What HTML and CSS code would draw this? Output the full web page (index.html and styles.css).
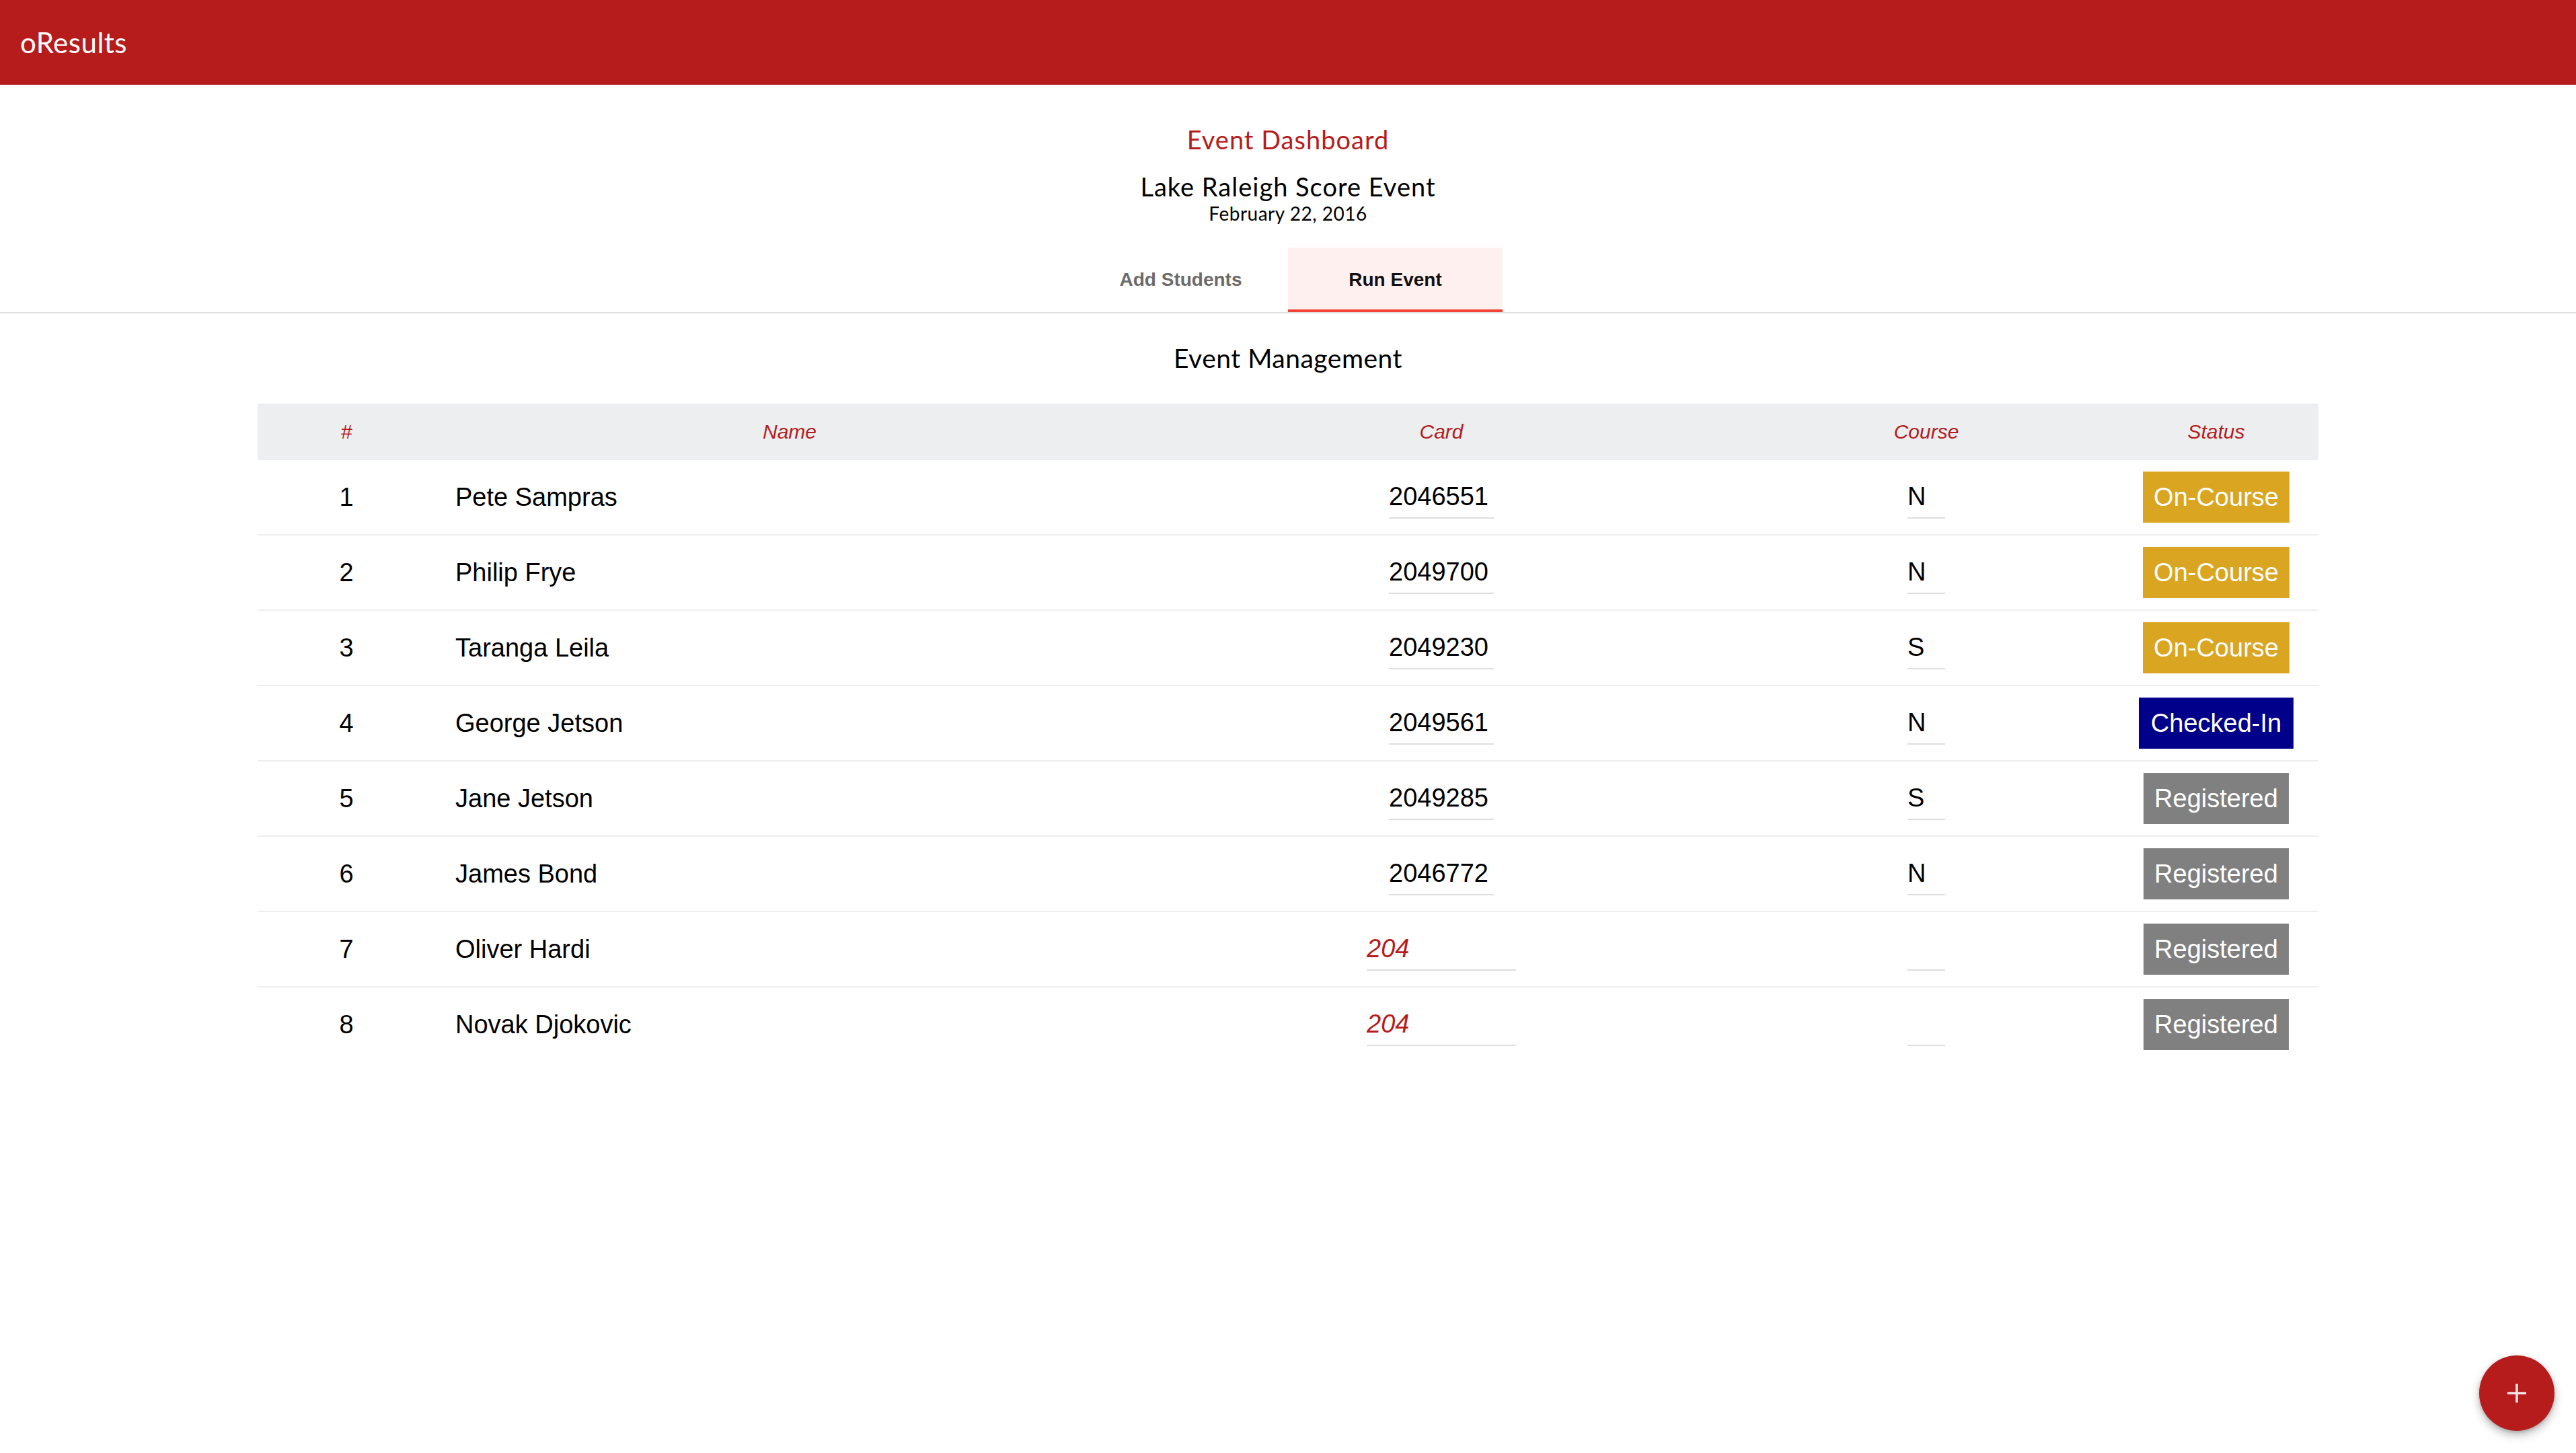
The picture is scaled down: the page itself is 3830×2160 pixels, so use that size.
FILE: index.html
```html
<!DOCTYPE html>
<html lang="en">
<head>
<meta charset="utf-8">
<title>oResults</title>
<link rel="stylesheet" href="styles.css">
</head>
<body>
<header class="appbar">
  <div class="brand">oResults</div>
</header>

<section class="dash-head">
  <h1 class="dash-title">Event Dashboard</h1>
  <h2 class="event-name">Lake Raleigh Score Event</h2>
  <div class="event-date">February 22, 2016</div>
</section>

<nav class="tabs">
  <div class="tab">Add Students</div>
  <div class="tab active">Run Event</div>
</nav>

<main class="manage">
  <h3 class="manage-title">Event Management</h3>
  <table class="runners">
    <colgroup>
      <col class="c-num">
      <col class="c-name">
      <col class="c-card">
      <col class="c-course">
      <col class="c-status">
    </colgroup>
    <thead>
      <tr><th>#</th><th>Name</th><th>Card</th><th>Course</th><th>Status</th></tr>
    </thead>
    <tbody>
      <tr>
        <td class="num">1</td><td class="name">Pete Sampras</td>
        <td class="mid"><input class="field card" value="2046551"></td>
        <td class="mid"><input class="field course" value="N"></td>
        <td class="mid"><span class="badge on-course">On-Course</span></td>
      </tr>
      <tr>
        <td class="num">2</td><td class="name">Philip Frye</td>
        <td class="mid"><input class="field card" value="2049700"></td>
        <td class="mid"><input class="field course" value="N"></td>
        <td class="mid"><span class="badge on-course">On-Course</span></td>
      </tr>
      <tr>
        <td class="num">3</td><td class="name">Taranga Leila</td>
        <td class="mid"><input class="field card" value="2049230"></td>
        <td class="mid"><input class="field course" value="S"></td>
        <td class="mid"><span class="badge on-course">On-Course</span></td>
      </tr>
      <tr>
        <td class="num">4</td><td class="name">George Jetson</td>
        <td class="mid"><input class="field card" value="2049561"></td>
        <td class="mid"><input class="field course" value="N"></td>
        <td class="mid"><span class="badge checked-in">Checked-In</span></td>
      </tr>
      <tr>
        <td class="num">5</td><td class="name">Jane Jetson</td>
        <td class="mid"><input class="field card" value="2049285"></td>
        <td class="mid"><input class="field course" value="S"></td>
        <td class="mid"><span class="badge registered">Registered</span></td>
      </tr>
      <tr>
        <td class="num">6</td><td class="name">James Bond</td>
        <td class="mid"><input class="field card" value="2046772"></td>
        <td class="mid"><input class="field course" value="N"></td>
        <td class="mid"><span class="badge registered">Registered</span></td>
      </tr>
      <tr>
        <td class="num">7</td><td class="name">Oliver Hardi</td>
        <td class="mid"><input class="field card pending" value="204"></td>
        <td class="mid"><input class="field course" value=""></td>
        <td class="mid"><span class="badge registered">Registered</span></td>
      </tr>
      <tr>
        <td class="num">8</td><td class="name">Novak Djokovic</td>
        <td class="mid"><input class="field card pending" value="204"></td>
        <td class="mid"><input class="field course" value=""></td>
        <td class="mid"><span class="badge registered">Registered</span></td>
      </tr>
    </tbody>
  </table>
</main>

<button class="fab" aria-label="Add">
  <svg class="fab-icon" viewBox="0 0 28 28" width="28" height="28">
    <path d="M14 0 V28 M0 14 H28" stroke="currentColor" stroke-width="3.5" fill="none"/>
  </svg>
</button>
</body>
</html>
```

FILE: styles.css
```css
html, body {
  margin: 0;
  padding: 0;
  background: #ffffff;
}

body {
  font-family: "Liberation Sans", Arial, sans-serif;
  color: #000;
  min-height: 100vh;
}

.appbar {
  height: 126px;
  background: #b71c1c;
  display: flex;
  align-items: center;
  padding-left: 30px;
}

.brand {
  font-family: Lato, "Open Sans", sans-serif;
  font-size: 42px;
  color: #ffffff;
  letter-spacing: 0.5px;
  line-height: 1;
}

.dash-head {
  text-align: center;
  font-family: Lato, "Open Sans", sans-serif;
}

.dash-title {
  margin: 56px 0 0;
  font-size: 38px;
  line-height: 50px;
  font-weight: 400;
  color: #b71c1c;
  letter-spacing: 1px;
}

.event-name {
  margin: 22px 0 0;
  font-size: 38px;
  line-height: 46px;
  font-weight: 400;
  color: #000;
  letter-spacing: 1px;
}

.event-date {
  font-size: 28px;
  line-height: 34px;
  font-weight: 400;
  color: #000;
  letter-spacing: 0.5px;
}

.tabs {
  margin-top: 34px;
  display: flex;
  justify-content: center;
  border-bottom: 2px solid #e2e2e2;
}

.tab {
  width: 319px;
  height: 96px;
  box-sizing: border-box;
  display: flex;
  align-items: center;
  justify-content: center;
  font-family: "Liberation Sans", Arial, sans-serif;
  font-weight: 700;
  font-size: 28px;
  color: #6b6b6b;
}

.tab.active {
  background: #fff0f0;
  color: #111;
  border-bottom: 4px solid #f44336;
  padding-top: 4px;
}

.manage-title {
  margin: 41px 0 0;
  text-align: center;
  font-family: Lato, "Open Sans", sans-serif;
  font-weight: 400;
  font-size: 39px;
  line-height: 50px;
  letter-spacing: 0.5px;
}

.runners {
  width: 80%;
  margin: 43px auto 0;
  border-collapse: collapse;
  table-layout: fixed;
}

.c-num { width: 264px; }
.c-name { width: 1054px; }
.c-card { width: 884px; }
.c-course { width: 558px; }
.c-status { width: 304px; }

.runners thead th {
  height: 84px;
  padding: 0;
  background: #eceef0;
  color: #b71c1c;
  font-style: italic;
  font-weight: 400;
  font-size: 30px;
  text-align: center;
  vertical-align: middle;
}

.runners tbody td {
  height: 110px;
  padding: 0;
  font-size: 38px;
  vertical-align: middle;
  border-bottom: 2px solid #eeeeee;
}

.runners tbody tr:last-child td {
  border-bottom: none;
}

.num { text-align: center; }
.name { padding-left: 30px !important; text-align: left; }
.mid { text-align: center; }

.field {
  box-sizing: content-box;
  height: 62px;
  padding: 0;
  margin: 0;
  border: none;
  border-bottom: 2px solid #dedede;
  background: transparent;
  font-family: "Liberation Sans", Arial, sans-serif;
  font-size: 38px;
  color: #000;
  outline: none;
  vertical-align: middle;
}

.field.card { width: 156px; }
.field.card.pending {
  width: 222px;
  color: #b71c1c;
  font-style: italic;
}
.field.course { width: 56px; }

.badge {
  display: inline-block;
  height: 76px;
  line-height: 76px;
  padding: 0 16px;
  color: #ffffff;
  font-size: 38px;
  vertical-align: middle;
}

.on-course { background: #daa520; }
.checked-in { background: #00008b; padding: 0 18px; }
.registered { background: #808080; }

.fab {
  position: fixed;
  right: 32px;
  bottom: 33px;
  width: 112px;
  height: 112px;
  border-radius: 50%;
  border: none;
  padding: 0;
  background: #b71c1c;
  color: rgba(255, 255, 255, 0.88);
  box-shadow: 0 6px 14px rgba(0, 0, 0, 0.28), 0 2px 5px rgba(0, 0, 0, 0.16);
  display: flex;
  align-items: center;
  justify-content: center;
}

.fab-icon { display: block; }
```
